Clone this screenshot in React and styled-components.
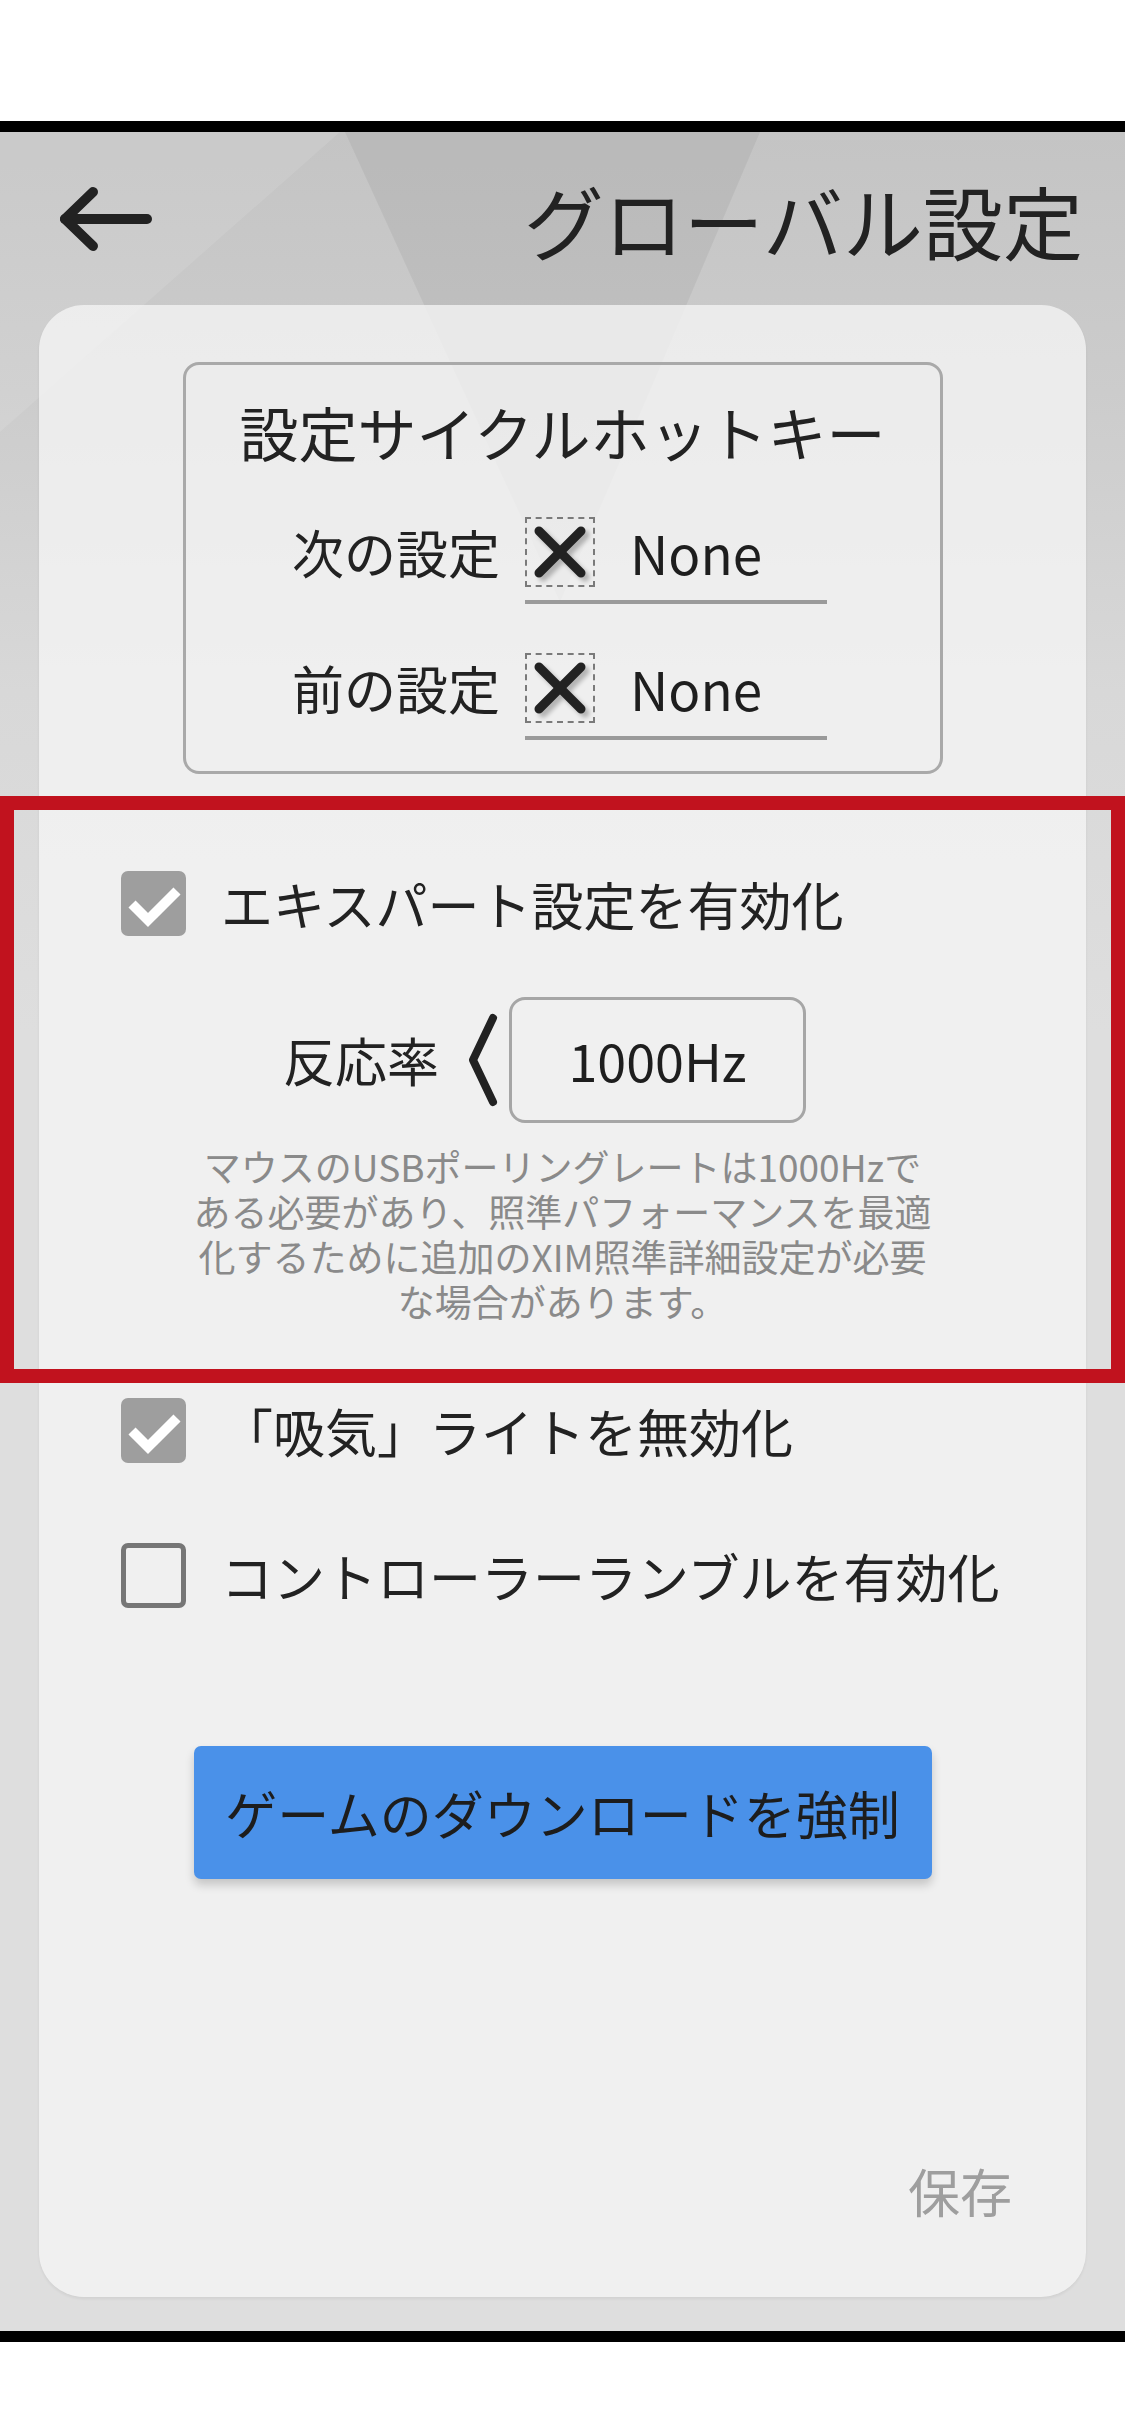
import React from 'react';
import styled, { createGlobalStyle } from 'styled-components';

const GlobalStyle = createGlobalStyle`
  html, body {
    margin: 0;
    padding: 0;
    background: #ffffff;
  }
  body {
    font-family: "Noto Sans CJK JP", Roboto, sans-serif;
    color: #222;
  }
`;

const Page = styled.div`
  position: relative;
  width: 1125px;
  height: 2436px;
  background: #fff;
  overflow: hidden;
`;

const TopSpace = styled.div`
  height: 121px;
  background: #fff;
`;

const BlackBar = styled.div`
  height: 11px;
  background: #000;
`;

const Screen = styled.div`
  position: relative;
  height: 2199px;
  display: flex;
  flex-direction: column;
  background: linear-gradient(180deg, #c4c4c4 0px, #cccccc 260px, #d8d8d8 560px, #dedede 900px, #dedede 100%);
  overflow: hidden;

  /* decorative facets of the background art */
  &::before {
    content: "";
    position: absolute;
    inset: 0;
    background: rgba(0, 0, 0, 0.05);
    clip-path: polygon(345px 0, 760px 0, 560px 470px);
  }
  &::after {
    content: "";
    position: absolute;
    inset: 0;
    background: rgba(255, 255, 255, 0.1);
    clip-path: polygon(0 300px, 340px 0, 0 0);
  }
`;

const Header = styled.header`
  position: relative;
  z-index: 1;
  height: 173px;
  display: flex;
  align-items: center;
  justify-content: space-between;
  padding: 0 42px 0 57px;
  box-sizing: border-box;
`;

const BackButton = styled.button`
  border: none;
  background: none;
  padding: 0;
  display: flex;
  cursor: pointer;
`;

const Title = styled.h1`
  margin: 0;
  font-size: 80px;
  font-weight: 400;
  color: #222;
  line-height: 1;
`;

const Card = styled.section`
  position: relative;
  z-index: 1;
  margin: 0 39px;
  height: 1992px;
  border-radius: 45px;
  background: rgba(246, 246, 246, 0.76);
  box-shadow: 0 2px 3px rgba(0, 0, 0, 0.06);
  display: flex;
  flex-direction: column;
  box-sizing: border-box;
  padding: 57px 0 70px;
`;

const HotkeyBox = styled.div`
  align-self: center;
  width: 760px;
  height: 412px;
  box-sizing: border-box;
  border: 3px solid #a9a9a9;
  border-radius: 16px;
  padding-top: 32px;
  display: flex;
  flex-direction: column;
  align-items: center;
`;

const HotkeyTitle = styled.div`
  font-size: 59px;
  line-height: 70px;
  color: #222;
`;

const HotkeyRow = styled.div`
  display: flex;
  align-items: flex-start;
  gap: 25px;
  margin-top: ${({ first }) => (first ? '50px' : '49px')};
  margin-right: 6px;
`;

const HotkeyLabel = styled.div`
  font-size: 52px;
  line-height: 70px;
  height: 70px;
  color: #222;
`;

const KeyField = styled.div`
  width: 302px;
  padding-bottom: 13px;
  border-bottom: 4px solid #9a9a9a;
  display: flex;
  align-items: center;
  gap: 35px;
`;

const KeySlot = styled.div`
  width: 70px;
  height: 70px;
  box-sizing: border-box;
  border: 2px dashed #7a7a7a;
  display: flex;
  align-items: center;
  justify-content: center;
`;

const KeyValue = styled.span`
  font-family: "Noto Sans CJK JP", Roboto, sans-serif;
  font-size: 53px;
  line-height: 70px;
  color: #1e1e1e;
`;

const CheckRow = styled.label`
  display: flex;
  align-items: center;
  gap: 35px;
  padding-left: 82px;
  margin-top: ${({ top }) => top}px;
  cursor: pointer;
`;

const Box = styled.span`
  width: 65px;
  height: 65px;
  flex: none;
  box-sizing: border-box;
  border-radius: 7px;
  display: flex;
  align-items: center;
  justify-content: center;
  background: ${({ checked }) => (checked ? '#9e9e9e' : 'transparent')};
  border: ${({ checked }) => (checked ? 'none' : '5px solid #767676')};
`;

const CheckText = styled.span`
  font-size: 52px;
  line-height: 1.3;
  color: #222;
`;

const RateRow = styled.div`
  display: flex;
  align-items: center;
  justify-content: center;
  margin-top: 59px;
  padding-right: 36px;
`;

const RateLabel = styled.span`
  font-size: 52px;
  color: #222;
  margin-right: 28px;
`;

const RateValue = styled.div`
  width: 297px;
  height: 126px;
  box-sizing: border-box;
  margin-left: 11px;
  border: 3px solid #a6a6a6;
  border-radius: 16px;
  display: flex;
  align-items: center;
  justify-content: center;
  font-size: 52px;
  color: #1e1e1e;
`;

const Note = styled.p`
  margin: 21px 0 0;
  text-align: center;
  font-size: 37px;
  line-height: 45px;
  color: #8a8a8a;
`;

const ForceButton = styled.button`
  align-self: center;
  margin-top: 136px;
  width: 738px;
  height: 133px;
  border: none;
  border-radius: 7px;
  background: #4a91e9;
  color: #1d1d1d;
  font-family: "Noto Sans CJK JP", Roboto, sans-serif;
  font-size: 52px;
  box-shadow: 0 6px 10px rgba(0, 0, 0, 0.18);
  cursor: pointer;
`;

const SaveButton = styled.button`
  align-self: flex-end;
  margin-top: auto;
  margin-right: 74px;
  border: none;
  background: none;
  padding: 0;
  font-family: "Noto Sans CJK JP", Roboto, sans-serif;
  font-size: 52px;
  line-height: 73px;
  color: #9e9e9e;
`;

const Highlight = styled.div`
  position: absolute;
  top: 796px;
  left: 0;
  width: 1125px;
  height: 587px;
  box-shadow: inset 0 0 0 14px #c1121e;
  pointer-events: none;
  z-index: 5;
`;

const BackArrow = () => (
  <svg width="97" height="66" viewBox="0 0 97 66">
    <g fill="none" stroke="#222" strokeWidth="10" strokeLinecap="round" strokeLinejoin="round">
      <path d="M8 33 H90" />
      <path d="M36 6 L8 33 L36 60" />
    </g>
  </svg>
);

const ClearIcon = () => (
  <svg width="54" height="54" viewBox="0 0 54 54" style={{ filter: 'drop-shadow(4px 4px 2px rgba(0,0,0,0.25))' }}>
    <g stroke="#222" strokeWidth="9" strokeLinecap="round">
      <path d="M6 6 L48 48" />
      <path d="M48 6 L6 48" />
    </g>
  </svg>
);

const Tick = () => (
  <svg width="65" height="65" viewBox="0 0 65 65">
    <path d="M11 33 L27 49 L56 20" fill="none" stroke="#fff" strokeWidth="10" />
  </svg>
);

const Chevron = () => (
  <svg width="31" height="94" viewBox="0 0 31 94">
    <path d="M26 5 L6 47 L26 89" fill="none" stroke="#222" strokeWidth="8" strokeLinecap="round" strokeLinejoin="round" />
  </svg>
);

const Checkbox = ({ checked, label, top }) => (
  <CheckRow top={top}>
    <Box checked={checked}>{checked && <Tick />}</Box>
    <CheckText>{label}</CheckText>
  </CheckRow>
);

const KeyBinding = ({ label, first }) => (
  <HotkeyRow first={first}>
    <HotkeyLabel>{label}</HotkeyLabel>
    <KeyField>
      <KeySlot>
        <ClearIcon />
      </KeySlot>
      <KeyValue>None</KeyValue>
    </KeyField>
  </HotkeyRow>
);

export default function App() {
  return (
    <>
      <GlobalStyle />
      <Page>
        <TopSpace />
        <BlackBar />
        <Screen>
          <Header>
            <BackButton aria-label="back">
              <BackArrow />
            </BackButton>
            <Title>グローバル設定</Title>
          </Header>
          <Card>
            <HotkeyBox>
              <HotkeyTitle>設定サイクルホットキー</HotkeyTitle>
              <KeyBinding label="次の設定" first />
              <KeyBinding label="前の設定" />
            </HotkeyBox>

            <Checkbox checked label="エキスパート設定を有効化" top={96} />
            <RateRow>
              <RateLabel>反応率</RateLabel>
              <Chevron />
              <RateValue>1000Hz</RateValue>
            </RateRow>
            <Note>
              マウスのUSBポーリングレートは1000Hzで<br />
              ある必要があり、照準パフォーマンスを最適<br />
              化するために追加のXIM照準詳細設定が必要<br />
              な場合があります。
            </Note>

            <Checkbox checked label="「吸気」ライトを無効化" top={73} />
            <Checkbox label="コントローラーランブルを有効化" top={78} />

            <ForceButton>ゲームのダウンロードを強制</ForceButton>
            <SaveButton>保存</SaveButton>
          </Card>
        </Screen>
        <BlackBar />
        <Highlight />
      </Page>
    </>
  );
}
